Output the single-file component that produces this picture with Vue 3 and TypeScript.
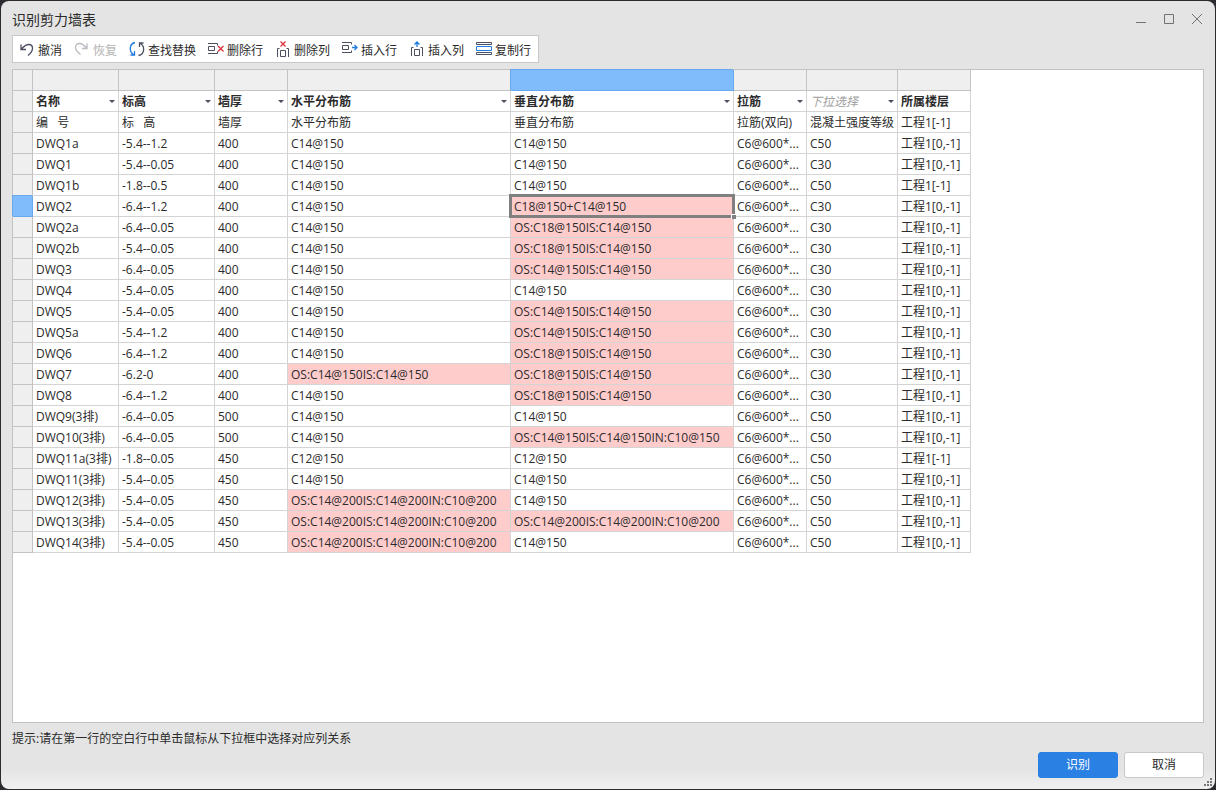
<script setup lang="ts">
import { ref } from 'vue'

interface Column {
  key: string
  label: string
  arrow: boolean
}

interface Cell {
  text: string
  error: boolean
}

const columns: Column[] = [
  { key: 'name', label: '名称', arrow: true },
  { key: 'level', label: '标高', arrow: true },
  { key: 'thick', label: '墙厚', arrow: true },
  { key: 'horizontal', label: '水平分布筋', arrow: true },
  { key: 'vertical', label: '垂直分布筋', arrow: true },
  { key: 'tie', label: '拉筋', arrow: true },
  { key: 'grade', label: '', arrow: true },
  { key: 'floor', label: '所属楼层', arrow: false },
]
const placeholder = '下拉选择'
const options = columns.map((c) => c.label).filter((l) => l !== '')
const mapping = ref<string[]>(columns.map((c) => c.label))

const c14 = 'C14@150'
const tie = 'C6@600*...'
const os18 = '!OS:C18@150IS:C14@150'
const os14 = '!OS:C14@150IS:C14@150'
const os200 = '!OS:C14@200IS:C14@200IN:C10@200'
const all = '工程1[0,-1]'
const base = '工程1[-1]'

// A leading "!" marks a value that could not be recognised.
const source: string[][] = [
  ['编   号', '标   高', '墙厚', '水平分布筋', '垂直分布筋', '拉筋(双向)', '混凝土强度等级', base],
  ['DWQ1a', '-5.4--1.2', '400', c14, c14, tie, 'C50', all],
  ['DWQ1', '-5.4--0.05', '400', c14, c14, tie, 'C30', all],
  ['DWQ1b', '-1.8--0.5', '400', c14, c14, tie, 'C50', base],
  ['DWQ2', '-6.4--1.2', '400', c14, '!C18@150+C14@150', tie, 'C30', all],
  ['DWQ2a', '-6.4--0.05', '400', c14, os18, tie, 'C30', all],
  ['DWQ2b', '-5.4--0.05', '400', c14, os18, tie, 'C30', all],
  ['DWQ3', '-6.4--0.05', '400', c14, os14, tie, 'C30', all],
  ['DWQ4', '-5.4--0.05', '400', c14, c14, tie, 'C30', all],
  ['DWQ5', '-5.4--0.05', '400', c14, os14, tie, 'C30', all],
  ['DWQ5a', '-5.4--1.2', '400', c14, os14, tie, 'C30', all],
  ['DWQ6', '-6.4--1.2', '400', c14, os18, tie, 'C30', all],
  ['DWQ7', '-6.2-0', '400', os14, os18, tie, 'C30', all],
  ['DWQ8', '-6.4--1.2', '400', c14, os18, tie, 'C30', all],
  ['DWQ9(3排)', '-6.4--0.05', '500', c14, c14, tie, 'C50', all],
  ['DWQ10(3排)', '-6.4--0.05', '500', c14, '!OS:C14@150IS:C14@150IN:C10@150', tie, 'C50', all],
  ['DWQ11a(3排)', '-1.8--0.05', '450', 'C12@150', 'C12@150', tie, 'C50', base],
  ['DWQ11(3排)', '-5.4--0.05', '450', c14, c14, tie, 'C50', all],
  ['DWQ12(3排)', '-5.4--0.05', '450', os200, c14, tie, 'C50', all],
  ['DWQ13(3排)', '-5.4--0.05', '450', os200, os200, tie, 'C50', all],
  ['DWQ14(3排)', '-5.4--0.05', '450', os200, c14, tie, 'C50', all],
]
const rows: Cell[][] = source.map((r) =>
  r.map((t) => ({ text: t.replace('!', ''), error: t.startsWith('!') })),
)

const selected = ref({ row: 4, col: 4 })
function select(row: number, col: number): void {
  selected.value = { row, col }
}
</script>

<template>
  <div class="desktop">
    <main class="dialog">
      <header class="titlebar">
        <h1>识别剪力墙表</h1>
        <div class="controls">
          <button type="button" aria-label="最小化">
            <svg width="12" height="12" viewBox="0 0 12 12"><path d="M1 9.500h10" /></svg>
          </button>
          <button type="button" aria-label="最大化">
            <svg width="12" height="12" viewBox="0 0 12 12"><path d="M1.500 1.500h9v9h-9z" /></svg>
          </button>
          <button type="button" aria-label="关闭">
            <svg width="12" height="12" viewBox="0 0 12 12"><path d="M1 1l10 10M11 1L1 11" /></svg>
          </button>
        </div>
      </header>

      <div class="toolbar" role="toolbar">
        <button type="button">
          <svg width="16" height="16" viewBox="0 0 16 16"><path class="bold" d="M2 3.500v5h5M2.500 8C5 5 7.500 3.500 10 3.500 12.500 3.500 13.500 5.500 13.500 7.500 13.500 10 12 12 9 14.500" /></svg>
          <span>撤消</span>
        </button>
        <button type="button" disabled>
          <svg width="16" height="16" viewBox="0 0 16 16"><path class="bold" d="M13 2.500v5h-5M12.500 7C10 4 8 2.500 5.500 2.500 3 2.500 1.500 4.500 1.500 6.500 1.500 9 3.500 11 6.500 13.500" /></svg>
          <span>恢复</span>
        </button>
        <button type="button">
          <svg width="16" height="16" viewBox="0 0 16 16">
            <path class="blue bold" d="M6 1.500C0 3 0 10.500 4.500 13.500M1.500 14h4v-4" />
            <path class="bold" d="M9.500 14.500C16 13 16 5.500 11.500 2.500M14.500 2h-4v4" />
          </svg>
          <span>查找替换</span>
        </button>
        <button type="button">
          <svg width="16" height="16" viewBox="0 0 16 16">
            <path d="M0 2.500h9.500v2M0 12.500h9.500v-2M.5 5.500h6v4h-6z" />
            <path class="red bold" d="M10 5l5.500 5.500M15.500 5L10 10.500" />
          </svg>
          <span>删除行</span>
        </button>
        <button type="button">
          <svg width="16" height="16" viewBox="0 0 16 16">
            <path d="M2.500 16V7.500h2M13.500 16V7.500h-2M5.500 9.500h5v6h-5z" />
            <path class="red bold" d="M5.500 .5l5 5M10.500 .5l-5 5" />
          </svg>
          <span>删除列</span>
        </button>
        <button type="button">
          <svg width="16" height="16" viewBox="0 0 16 16">
            <path d="M0 1.500h9.500v2M0 11.500h9.500v-2M.5 4.500h6v4h-6z" />
            <path class="blue bold" d="M10 6.500h5M12.500 4l2.500 2.500-2.500 2.500" />
          </svg>
          <span>插入行</span>
        </button>
        <button type="button">
          <svg width="16" height="16" viewBox="0 0 16 16">
            <path d="M2.500 15V6.500h2M13.500 15V6.500h-2M5.500 8.500h5v6h-5z" />
            <path class="blue bold" d="M8 6V1M5.500 3.500L8 1l2.500 2.500" />
          </svg>
          <span>插入列</span>
        </button>
        <button type="button">
          <svg width="16" height="16" viewBox="0 0 16 16">
            <path d="M.5 3.500v-2h15v2zM.5 11.500h15v2h-15z" />
            <path class="blue" d="M.5 5.500h15v4h-15z" />
          </svg>
          <span>复制行</span>
        </button>
      </div>

      <section class="panel">
        <table>
          <colgroup>
            <col class="w-mark" /><col class="w-name" /><col class="w-level" /><col class="w-small" />
            <col class="w-bar" /><col class="w-bar" /><col class="w-small" /><col class="w-grade" /><col class="w-small" />
          </colgroup>
          <thead>
            <tr>
              <td class="mark"></td>
              <td v-for="(c, i) in columns" :key="c.key" class="mark" :class="{ active: i === selected.col }"></td>
            </tr>
            <tr>
              <td class="mark"></td>
              <th v-for="(c, i) in columns" :key="c.key" scope="col">
                <div class="pick" :class="{ arrow: c.arrow }">
                  <select v-model="mapping[i]" :class="{ empty: mapping[i] === '' }" :aria-label="'第' + (i + 1) + '列'">
                    <option value="">{{ placeholder }}</option>
                    <option v-for="o in options" :key="o" :value="o">{{ o }}</option>
                  </select>
                </div>
              </th>
            </tr>
          </thead>
          <tbody>
            <tr v-for="(r, y) in rows" :key="y">
              <td class="mark" :class="{ active: y === selected.row }"></td>
              <td
                v-for="(cell, x) in r"
                :key="x"
                :class="{ error: cell.error, current: y === selected.row && x === selected.col }"
                @click="select(y, x)"
              >
                <div class="text">{{ cell.text }}</div>
              </td>
            </tr>
          </tbody>
        </table>
      </section>

      <p class="hint">提示:请在第一行的空白行中单击鼠标从下拉框中选择对应列关系</p>

      <footer>
        <button type="button" class="primary">识别</button>
        <button type="button">取消</button>
      </footer>
      <svg class="grip" width="8" height="8" viewBox="0 0 8 8">
        <path d="M6 0h2v2h-2zM3 3h2v2h-2zM6 3h2v2h-2zM0 6h2v2h-2zM3 6h2v2h-2zM6 6h2v2h-2z" />
      </svg>
    </main>
  </div>
</template>

<style>
body {
  margin: 0;
  background: #2c2a2e;
}
</style>

<style scoped>
* {
  box-sizing: border-box;
}
.desktop {
  display: flex;
  min-height: 100vh;
  padding: 1px;
  background: #2c2a2e;
  font-family: "Open Sans", "Noto Sans CJK SC", sans-serif;
  font-size: 12px;
  line-height: 20px;
  color: #2b2b2b;
}
.dialog {
  position: relative;
  flex: 1;
  min-width: 0;
  display: flex;
  flex-direction: column;
  padding: 0 11px 11px;
  border-radius: 8px;
  background: linear-gradient(to top, #f0f0f0, #e4e4e4 20px);
}
button {
  font: inherit;
  color: inherit;
  cursor: pointer;
}
svg {
  flex: none;
  fill: none;
  stroke: #4b5060;
}
.titlebar {
  display: flex;
  justify-content: space-between;
  align-items: center;
  height: 34px;
}
h1 {
  margin: 4px 0 0;
  font-size: 14px;
  font-weight: 400;
}
.controls {
  display: flex;
  gap: 16px;
  margin: 2px 1px 0 0;
}
.controls button {
  display: flex;
  padding: 0;
  border: 0;
  background: none;
}
.controls svg {
  stroke: #737373;
}
.toolbar {
  display: flex;
  align-items: center;
  align-self: flex-start;
  gap: 12px;
  height: 28px;
  padding: 0 7px 0 6px;
  border: 1px solid #c6c8cc;
  background: #fff;
}
.toolbar button {
  display: flex;
  align-items: center;
  gap: 3px;
  padding: 0;
  border: 0;
  background: none;
  white-space: nowrap;
}
.toolbar span {
  line-height: 16px;
  padding-top: 3px;
}
.toolbar button:disabled {
  color: #b4b4b4;
}
.toolbar button:disabled svg {
  stroke: #b9bbc0;
}
.toolbar .bold {
  stroke-width: 1.3;
}
.toolbar .blue {
  stroke: #1f7be0;
}
.toolbar .red {
  stroke: #dc2f3c;
}
.panel {
  flex: 1;
  margin-top: 6px;
  border: 1px solid #c3c3c3;
  background: #fff;
}
table {
  table-layout: fixed;
  width: 958px;
  border-collapse: separate;
  border-spacing: 0;
}
.w-mark { width: 20px; }
.w-name { width: 86px; }
.w-level { width: 96px; }
.w-small { width: 73px; }
.w-bar { width: 223px; }
.w-grade { width: 91px; }
td,
th {
  position: relative;
  height: 21px;
  padding: 0 0 0 3px;
  border: solid #d4d4d4;
  border-width: 0 1px 1px 0;
  text-align: left;
}
.text {
  height: 20px;
  line-height: 22px;
  overflow: hidden;
  white-space: pre;
  text-overflow: ellipsis;
}
.mark {
  padding: 0;
  border-color: #c3c3c3;
  background: #efefef;
}
.mark.active {
  border-color: #68a9ee;
  background: #80bbfb;
  box-shadow: -1px -1px 0 #68a9ee;
}
.error {
  background: #ffcccc;
}
.current::before {
  content: "";
  position: absolute;
  z-index: 1;
  inset: -2px;
  border: 3px solid #808080;
}
.current::after {
  content: "";
  position: absolute;
  z-index: 2;
  right: -3px;
  bottom: -3px;
  width: 4px;
  height: 4px;
  border: solid #fff;
  border-width: 1px 0 0 1px;
  box-sizing: content-box;
  background: #808080;
}
.pick {
  position: relative;
  display: flex;
}
.pick.arrow::after {
  content: "";
  position: absolute;
  right: 3px;
  top: 9px;
  border: solid transparent;
  border-width: 3px 3px 0;
  border-top-color: #4b5060;
  pointer-events: none;
}
select {
  appearance: none;
  width: 100%;
  height: 20px;
  padding: 2px 0 0;
  border: 0;
  background: none;
  font: inherit;
  font-weight: 700;
  line-height: 18px;
  color: inherit;
}
select.empty {
  font-weight: 400;
  font-style: italic;
  color: #a0a0a0;
}
.hint {
  margin: 6px 0 3px;
}
footer {
  display: flex;
  justify-content: flex-end;
  gap: 6px;
}
footer button {
  width: 80px;
  height: 26px;
  padding: 0;
  border: 1px solid #c8c8c8;
  border-radius: 3px;
  background: #fff;
}
footer .primary {
  border-color: #2b80e3;
  background: #2b80e3;
  color: #fff;
}
.grip {
  position: absolute;
  right: 3px;
  bottom: 3px;
  fill: #777;
  stroke: none;
}
</style>
